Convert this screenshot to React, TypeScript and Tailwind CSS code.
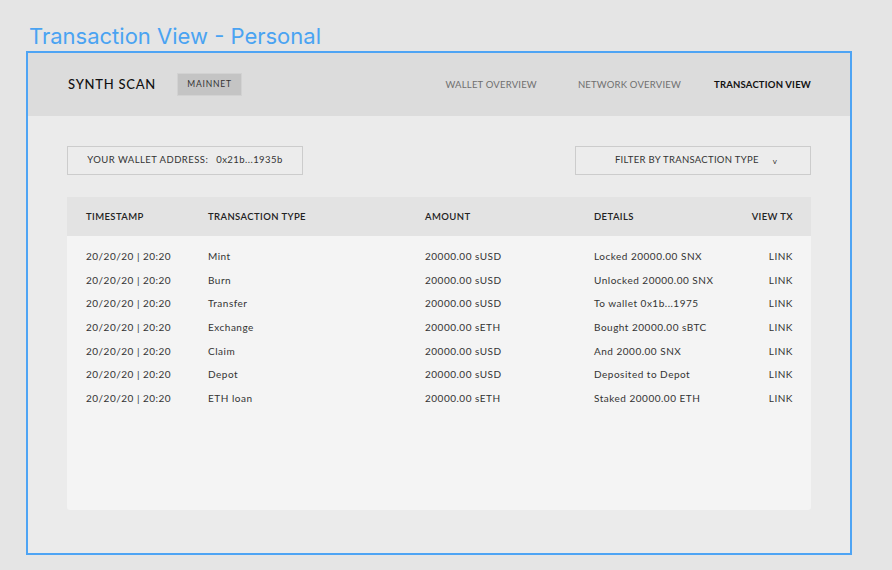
const rows = [
  { type: "Mint", amount: "20000.00 sUSD", details: "Locked 20000.00 SNX" },
  { type: "Burn", amount: "20000.00 sUSD", details: "Unlocked 20000.00 SNX" },
  { type: "Transfer", amount: "20000.00 sUSD", details: "To wallet 0x1b...1975" },
  { type: "Exchange", amount: "20000.00 sETH", details: "Bought 20000.00 sBTC" },
  { type: "Claim", amount: "20000.00 sUSD", details: "And 2000.00 SNX" },
  { type: "Depot", amount: "20000.00 sUSD", details: "Deposited to Depot" },
  { type: "ETH loan", amount: "20000.00 sETH", details: "Staked 20000.00 ETH" },
];

export default function App() {
  return (
    <div className="min-h-[570px] bg-[#e5e5e5] pt-[22px] pl-[26px] font-['Lato',sans-serif]">
      <h1 className="pl-[3px] font-['Inter',sans-serif] text-[22px] leading-[28px] text-[#4aa3f2]">
        Transaction View - Personal
      </h1>

      <div className="mt-[1px] flex h-[504px] w-[826px] flex-col border-2 border-[#4ea4f4] bg-[#ebebeb]">
        {/* top bar */}
        <header className="flex h-[63px] shrink-0 items-center bg-[#dcdcdc] pl-[40px] pr-[39px]">
          <span className="text-[13px] font-medium tracking-[0.75px] text-[#111]">SYNTH SCAN</span>
          <span className="ml-[21px] flex h-[23px] w-[65px] items-center justify-center border border-[#d2d2d2] bg-[#c4c4c4] text-[8.5px] tracking-[0.8px] text-[#333]">
            MAINNET
          </span>
          <nav className="ml-auto flex items-center pt-[2px] text-[9.5px] tracking-[0.2px]">
            <span className="text-[#6f6f6f]">WALLET OVERVIEW</span>
            <span className="ml-[41px] text-[#6f6f6f]">NETWORK OVERVIEW</span>
            <span className="ml-[33px] font-bold text-[#111]">TRANSACTION VIEW</span>
          </nav>
        </header>

        <main className="flex flex-1 flex-col pt-[30px] pl-[39px] pr-[39px] pb-[43px]">
          <div className="flex justify-between">
            <div className="flex h-[29px] w-[236px] items-center justify-center border border-[#cccccc] bg-[#ececec] text-[9.5px] tracking-[0.45px] text-[#333]">
              YOUR WALLET ADDRESS:<span className="ml-[8px]">0x21b...1935b</span>
            </div>
            <div className="flex h-[29px] w-[236px] items-center justify-center border border-[#cccccc] bg-[#ececec] pl-[6px] text-[9.5px] tracking-[0.3px] text-[#333]">
              FILTER BY TRANSACTION TYPE<span className="ml-[14px] text-[8px]">v</span>
            </div>
          </div>

          <div className="mt-[22px] flex flex-1 flex-col overflow-hidden rounded-b-[3px] bg-[#f4f4f4]">
            <div className="grid h-[39px] shrink-0 grid-cols-[122px_217px_169px_1fr] items-center bg-[#e3e3e3] pt-[1px] pl-[19px] pr-[18px] text-[9.5px] font-semibold tracking-[0.4px] text-[#222]">
              <span>TIMESTAMP</span>
              <span>TRANSACTION TYPE</span>
              <span>AMOUNT</span>
              <div className="flex justify-between">
                <span>DETAILS</span>
                <span>VIEW TX</span>
              </div>
            </div>
            <div className="pt-[9px]">
              {rows.map((r) => (
                <div
                  key={r.type}
                  className="grid h-[23.6px] grid-cols-[122px_217px_169px_1fr] items-center pl-[19px] pr-[18px] text-[10px] tracking-[0.5px] text-[#333]"
                >
                  <span>20/20/20 | 20:20</span>
                  <span>{r.type}</span>
                  <span>{r.amount}</span>
                  <div className="flex justify-between">
                    <span>{r.details}</span>
                    <span>LINK</span>
                  </div>
                </div>
              ))}
            </div>
          </div>
        </main>
      </div>
    </div>
  );
}
